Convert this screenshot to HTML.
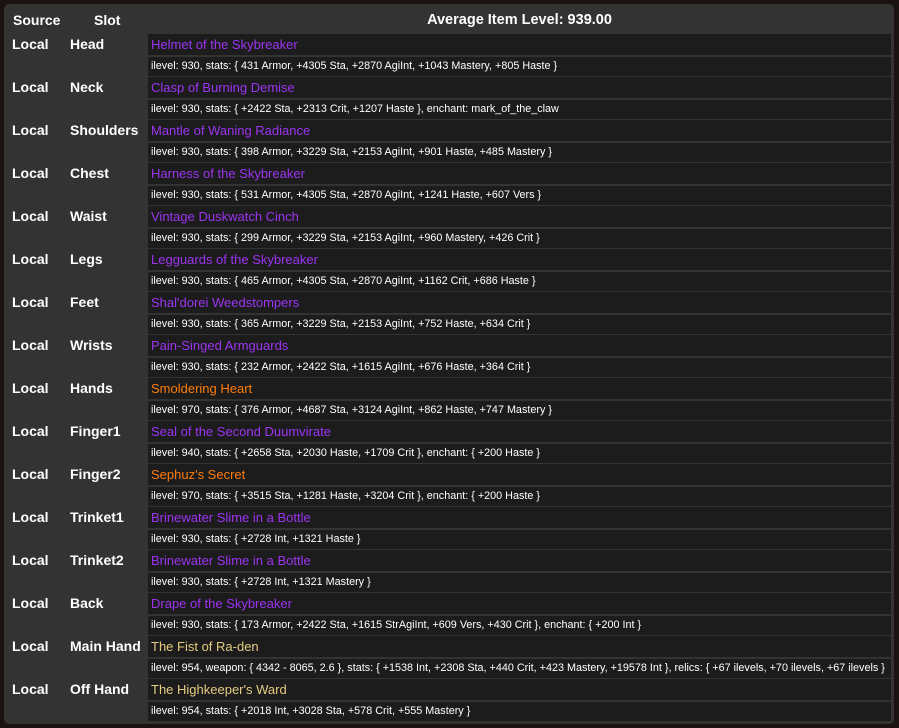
<!DOCTYPE html>
<html><head><meta charset="utf-8"><style>
html,body{margin:0;padding:0;width:899px;height:728px;background:#1b1311;overflow:hidden;font-family:"Liberation Sans",Arial,sans-serif;}
#p{position:absolute;left:4px;top:4px;width:890px;height:720px;background:#333;border-radius:5px;}
.h{position:absolute;color:#fff;font-weight:bold;font-size:14px;top:12px;}
.l{position:absolute;color:#fff;font-weight:bold;font-size:14px;}
.c{position:absolute;left:148px;width:743px;background:#1c1c1c;white-space:nowrap;overflow:hidden;}
.n{height:21px;line-height:21px;font-size:13px;padding-left:3px;box-sizing:border-box;}
.s{height:19px;line-height:19px;font-size:10.8px;color:#fff;padding-left:3px;box-sizing:border-box;}
.e{color:#9d34f2}.o{color:#ff7d0a}.a{color:#e5cc80}
</style></head><body>
<div id="p"></div>
<div class="h" style="left:13px">Source</div>
<div class="h" style="left:94px">Slot</div>
<div class="h" style="left:148px;width:743px;text-align:center;font-size:14.5px">Average Item Level: 939.00</div>
<div id="rows"></div>
<script>
var d=[
["Head","Helmet of the Skybreaker","e","ilevel: 930, stats: { 431 Armor, +4305 Sta, +2870 AgiInt, +1043 Mastery, +805 Haste }"],
["Neck","Clasp of Burning Demise","e","ilevel: 930, stats: { +2422 Sta, +2313 Crit, +1207 Haste }, enchant: mark_of_the_claw"],
["Shoulders","Mantle of Waning Radiance","e","ilevel: 930, stats: { 398 Armor, +3229 Sta, +2153 AgiInt, +901 Haste, +485 Mastery }"],
["Chest","Harness of the Skybreaker","e","ilevel: 930, stats: { 531 Armor, +4305 Sta, +2870 AgiInt, +1241 Haste, +607 Vers }"],
["Waist","Vintage Duskwatch Cinch","e","ilevel: 930, stats: { 299 Armor, +3229 Sta, +2153 AgiInt, +960 Mastery, +426 Crit }"],
["Legs","Legguards of the Skybreaker","e","ilevel: 930, stats: { 465 Armor, +4305 Sta, +2870 AgiInt, +1162 Crit, +686 Haste }"],
["Feet","Shal'dorei Weedstompers","e","ilevel: 930, stats: { 365 Armor, +3229 Sta, +2153 AgiInt, +752 Haste, +634 Crit }"],
["Wrists","Pain-Singed Armguards","e","ilevel: 930, stats: { 232 Armor, +2422 Sta, +1615 AgiInt, +676 Haste, +364 Crit }"],
["Hands","Smoldering Heart","o","ilevel: 970, stats: { 376 Armor, +4687 Sta, +3124 AgiInt, +862 Haste, +747 Mastery }"],
["Finger1","Seal of the Second Duumvirate","e","ilevel: 940, stats: { +2658 Sta, +2030 Haste, +1709 Crit }, enchant: { +200 Haste }"],
["Finger2","Sephuz's Secret","o","ilevel: 970, stats: { +3515 Sta, +1281 Haste, +3204 Crit }, enchant: { +200 Haste }"],
["Trinket1","Brinewater Slime in a Bottle","e","ilevel: 930, stats: { +2728 Int, +1321 Haste }"],
["Trinket2","Brinewater Slime in a Bottle","e","ilevel: 930, stats: { +2728 Int, +1321 Mastery }"],
["Back","Drape of the Skybreaker","e","ilevel: 930, stats: { 173 Armor, +2422 Sta, +1615 StrAgiInt, +609 Vers, +430 Crit }, enchant: { +200 Int }"],
["Main Hand","The Fist of Ra-den","a","ilevel: 954, weapon: { 4342 - 8065, 2.6 }, stats: { +1538 Int, +2308 Sta, +440 Crit, +423 Mastery, +19578 Int }, relics: { +67 ilevels, +70 ilevels, +67 ilevels }"],
["Off Hand","The Highkeeper's Ward","a","ilevel: 954, stats: { +2018 Int, +3028 Sta, +578 Crit, +555 Mastery }"]];
var h="";
d.forEach(function(r,i){var t=34+43*i;
h+='<div class="l" style="left:12px;top:'+(t+2)+'px">Local</div><div class="l" style="left:70px;top:'+(t+2)+'px">'+r[0]+'</div>';
h+='<div class="c n '+r[2]+'" style="top:'+t+'px">'+r[1]+'</div><div class="c s" style="top:'+(t+23)+'px">'+r[3]+'</div>';});
document.getElementById("rows").innerHTML=h;
</script>
</body></html>
